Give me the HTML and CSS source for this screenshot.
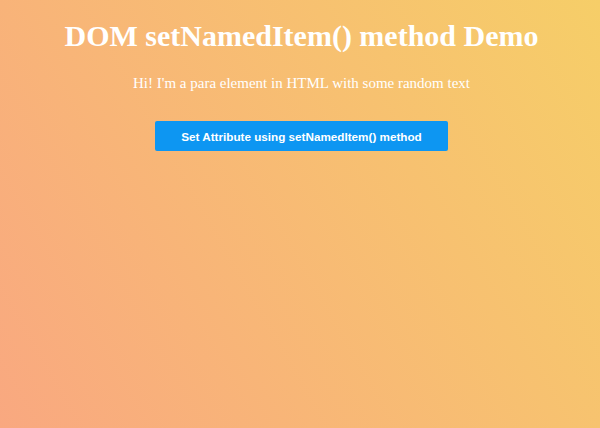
FILE: index.html
```html
<!DOCTYPE html>
<html>
<head>
<meta charset="utf-8">
<link rel="stylesheet" href="styles.css">
</head>
<body>
<div class="page">
  <h1 class="title">DOM setNamedItem() method Demo</h1>
  <p class="para">Hi! I'm a para element in HTML with some random text</p>
  <button class="btn">Set Attribute using setNamedItem() method</button>
</div>
</body>
</html>
```
FILE: styles.css
```css
html, body {
  margin: 0;
  height: 100%;
}
body {
  background: linear-gradient(60deg, #f9a880 0%, #f6ce68 100%);
  font-family: "Liberation Serif", "Times New Roman", serif;
  color: #fff;
}
.page {
  display: flex;
  flex-direction: column;
  align-items: center;
  padding: 19px 0 0 3px;
}
.title {
  margin: 0;
  font-size: 30px;
  font-weight: bold;
  line-height: 34px;
}
.para {
  margin: 21px 0 0;
  font-size: 15px;
  line-height: 18px;
}
.btn {
  margin-top: 29px;
  width: 293px;
  height: 30px;
  border: none;
  border-radius: 2px;
  background: #0d96f2;
  color: #fff;
  font-family: "Liberation Sans", Arial, sans-serif;
  font-size: 11.7px;
  font-weight: bold;
}
```
